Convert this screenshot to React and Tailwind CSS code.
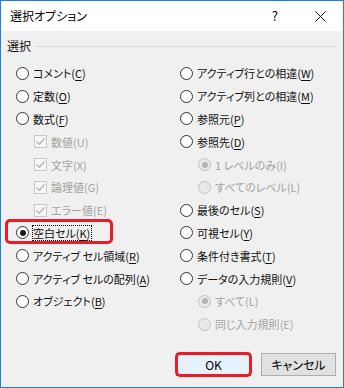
import React from "react";

const FONT = "font-['Noto_Sans_CJK_JP',sans-serif] [font-feature-settings:'palt']";

function Radio({ selected, disabled }) {
  return (
    <span
      className={
        "relative flex h-[13px] w-[13px] shrink-0 items-center justify-center rounded-full border " +
        (disabled ? "border-[#c2c2c2] bg-[#e9e9e9]" : "border-[#333333] bg-white")
      }
    >
      {selected && (
        <span
          className={
            "h-[6px] w-[6px] rounded-full " + (disabled ? "bg-[#b4b4b4]" : "bg-[#1a1a1a]")
          }
        />
      )}
    </span>
  );
}

function Check() {
  return (
    <span className="flex h-[13px] w-[13px] shrink-0 items-center justify-center border border-[#c8c8c8] bg-[#f7f7f7]">
      <svg width="11" height="11" viewBox="0 0 11 11">
        <path d="M1.5 5.5 L4.2 8.3 L9.5 2.5" fill="none" stroke="#b5b5b5" strokeWidth="1.3" />
      </svg>
    </span>
  );
}

function Label({ text, k, disabled, focus }) {
  return (
    <span
      className={
        "whitespace-pre leading-[14px] " +
        (disabled ? "text-[#a3a3a3] " : "text-[#111] ") +
        (focus ? "outline outline-1 outline-dotted outline-black outline-offset-0 pr-[1px]" : "")
      }
    >
      {text}(
      {disabled ? k : <u className="underline underline-offset-[2px]">{k}</u>})
    </span>
  );
}

function Row({ item }) {
  const indent = item.sub;
  return (
    <div className={"relative flex h-[22.8px] items-center gap-[4px] " + (indent ? "pl-[18px]" : "")}>
      {item.type === "check" ? (
        <Check />
      ) : (
        <Radio selected={item.selected} disabled={item.disabled} />
      )}
      <Label text={item.label} k={item.k} disabled={item.disabled} focus={item.focus} />
      {item.highlight && (
        <span className="pointer-events-none absolute left-[-11px] top-[-3px] h-[25px] w-[108px] rounded-[5px] border-[3px] border-[#ec1c24]" />
      )}
    </div>
  );
}

const left = [
  { label: "コメント", k: "C" },
  { label: "定数", k: "O" },
  { label: "数式", k: "F" },
  { type: "check", label: "数値", k: "U", disabled: true, sub: true },
  { type: "check", label: "文字", k: "X", disabled: true, sub: true },
  { type: "check", label: "論理値", k: "G", disabled: true, sub: true },
  { type: "check", label: "エラー値", k: "E", disabled: true, sub: true },
  { label: "空白セル", k: "K", selected: true, focus: true, highlight: true },
  { label: "アクティブ セル領域", k: "R" },
  { label: "アクティブ セルの配列", k: "A" },
  { label: "オブジェクト", k: "B" },
];

const right = [
  { label: "アクティブ行との相違", k: "W" },
  { label: "アクティブ列との相違", k: "M" },
  { label: "参照元", k: "P" },
  { label: "参照先", k: "D" },
  { label: "1 レベルのみ", k: "I", disabled: true, selected: true, sub: true },
  { label: "すべてのレベル", k: "L", disabled: true, sub: true },
  { label: "最後のセル", k: "S" },
  { label: "可視セル", k: "Y" },
  { label: "条件付き書式", k: "T" },
  { label: "データの入力規則", k: "V" },
  { label: "すべて", k: "L", disabled: true, selected: true, sub: true },
  { label: "同じ入力規則", k: "E", disabled: true, sub: true },
];

export default function App() {
  return (
    <div className={"flex h-[388px] w-[344px] flex-col border border-[#1c84d6] bg-[#f0f0f0] text-[11px] " + FONT}>
      <div className="flex h-[30px] shrink-0 items-center bg-white pl-[9px]">
        <span className="flex-1 text-[12px] text-black">選択オプション</span>
        <span className="mr-[37px] text-[13px] text-black">?</span>
        <svg width="11" height="11" viewBox="0 0 11 11" className="mr-[17px]">
          <path d="M0.5 0.5 L10.5 10.5 M10.5 0.5 L0.5 10.5" stroke="#111" strokeWidth="1" />
        </svg>
      </div>
      <div className="flex flex-1 flex-col px-[6px] pt-[6px]">
        <div className="flex items-center">
          <span className="text-[12px] text-[#111]">選択</span>
          <span className="ml-[4px] h-px flex-1 bg-[#dadada]" />
        </div>
        <div className="mt-[7px] flex">
          <div className="ml-[9px] flex w-[164px] flex-col">
            {left.map((it, i) => (
              <Row key={i} item={it} />
            ))}
          </div>
          <div className="flex flex-col">
            {right.map((it, i) => (
              <Row key={i} item={it} />
            ))}
          </div>
        </div>
        <div className="mt-auto mb-[11px] flex justify-end gap-[10px] pr-[1px]">
          <div className="relative flex h-[23px] w-[75px] items-center justify-center border border-[#0078d7] bg-[#e5f1fb] text-[12px] text-black">
            OK
            <span className="pointer-events-none absolute -inset-[2px] rounded-[5px] border-[3px] border-[#ec1c24]" />
          </div>
          <div className="flex h-[23px] w-[75px] items-center justify-center border border-[#adadad] bg-[#e1e1e1] text-[12px] text-black">
            キャンセル
          </div>
        </div>
      </div>
    </div>
  );
}
